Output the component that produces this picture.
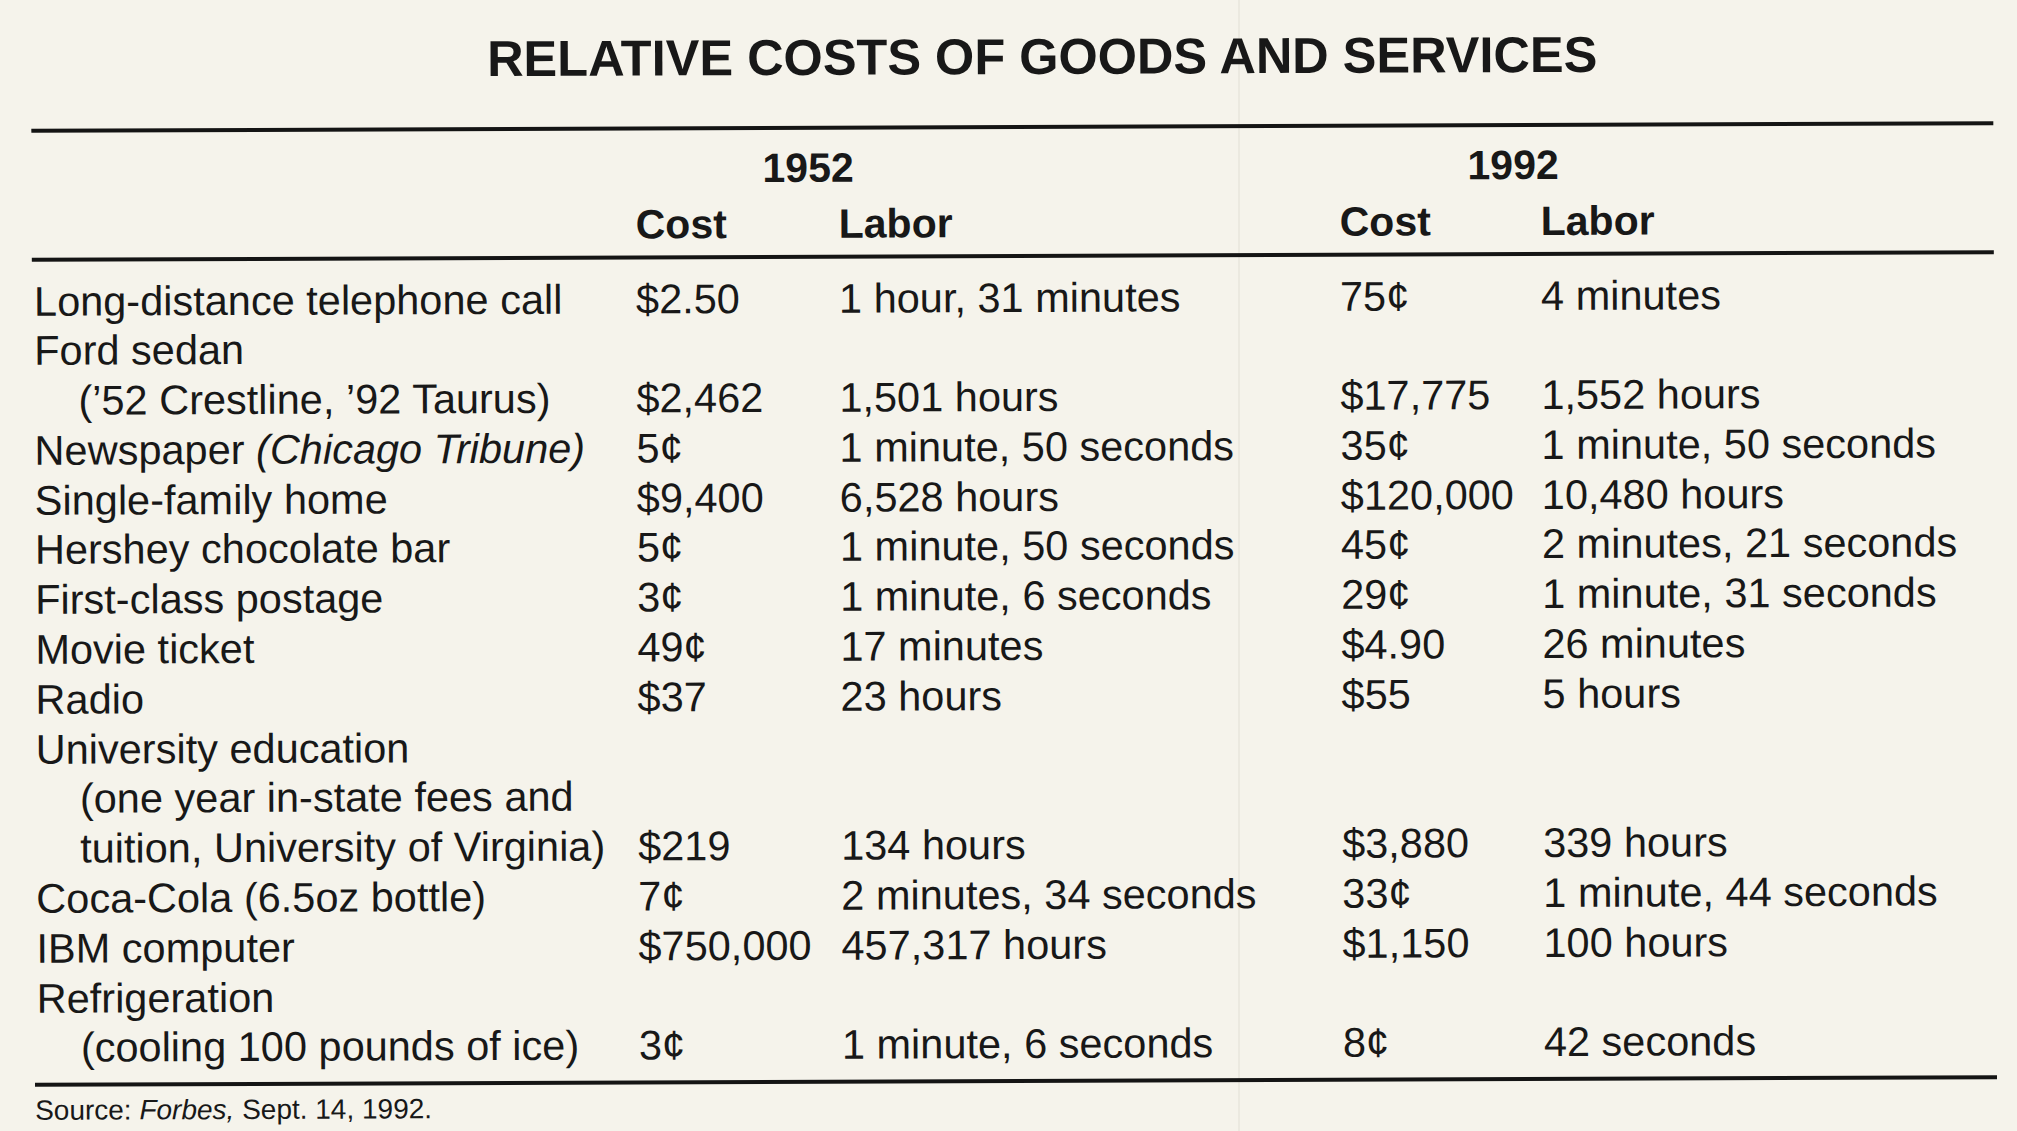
import React from "react";

type Row = { label: React.ReactNode; indent?: boolean; c1?: string; l1?: string; c2?: string; l2?: string };

const rows: Row[] = [
  { label: "Long-distance telephone call", c1: "$2.50", l1: "1 hour, 31 minutes", c2: "75¢", l2: "4 minutes" },
  { label: "Ford sedan" },
  { label: "(’52 Crestline, ’92 Taurus)", indent: true, c1: "$2,462", l1: "1,501 hours", c2: "$17,775", l2: "1,552 hours" },
  {
    label: (
      <>
        Newspaper <span className="italic">(Chicago Tribune)</span>
      </>
    ),
    c1: "5¢",
    l1: "1 minute, 50 seconds",
    c2: "35¢",
    l2: "1 minute, 50 seconds",
  },
  { label: "Single-family home", c1: "$9,400", l1: "6,528 hours", c2: "$120,000", l2: "10,480 hours" },
  { label: "Hershey chocolate bar", c1: "5¢", l1: "1 minute, 50 seconds", c2: "45¢", l2: "2 minutes, 21 seconds" },
  { label: "First-class postage", c1: "3¢", l1: "1 minute, 6 seconds", c2: "29¢", l2: "1 minute, 31 seconds" },
  { label: "Movie ticket", c1: "49¢", l1: "17 minutes", c2: "$4.90", l2: "26 minutes" },
  { label: "Radio", c1: "$37", l1: "23 hours", c2: "$55", l2: "5 hours" },
  { label: "University education" },
  { label: "(one year in-state fees and", indent: true },
  { label: "tuition, University of Virginia)", indent: true, c1: "$219", l1: "134 hours", c2: "$3,880", l2: "339 hours" },
  { label: "Coca-Cola (6.5oz bottle)", c1: "7¢", l1: "2 minutes, 34 seconds", c2: "33¢", l2: "1 minute, 44 seconds" },
  { label: "IBM computer", c1: "$750,000", l1: "457,317 hours", c2: "$1,150", l2: "100 hours" },
  { label: "Refrigeration" },
  { label: "(cooling 100 pounds of ice)", indent: true, c1: "3¢", l1: "1 minute, 6 seconds", c2: "8¢", l2: "42 seconds" },
];

const cols = "grid grid-cols-[604px_203px_501px_201px_1fr]";

export default function App() {
  return (
    <div
      className="relative w-[2017px] h-[1131px] overflow-hidden bg-[#f5f3eb]"
      style={{ fontFamily: '"Liberation Sans", Arial, sans-serif' }}
    >
      {/* faint paper gutter showing through the scan */}
      <div className="absolute left-[1238px] top-0 h-full w-[2px] bg-[#ebe9e0]" />

      <div className="relative ml-[33px] w-[1962px] rotate-[-0.22deg] text-[#181818]">
        <h1 className="pt-[32px] pl-[456px] text-[50.5px] font-bold leading-none whitespace-nowrap">
          RELATIVE COSTS OF GOODS AND SERVICES
        </h1>
        <div className="mt-[42px] h-[4px] bg-[#141414]" />

        <div className={`${cols} mt-[18px] text-[41px] font-bold leading-[41px]`}>
          <div />
          <div className="col-span-2 pl-[127px]">1952</div>
          <div className="col-span-2 pl-[128px]">1992</div>
        </div>
        <div className={`${cols} mt-[15px] text-[41px] font-bold leading-[41px]`}>
          <div />
          <div>Cost</div>
          <div>Labor</div>
          <div>Cost</div>
          <div>Labor</div>
        </div>
        <div className="mt-[10px] h-[4px] bg-[#141414]" />

        <div className="mt-[15px] text-[41.5px] leading-[49.8px]">
          {rows.map((r, i) => (
            <div key={i} className={`${cols} whitespace-nowrap`}>
              <div className={r.indent ? "pl-[46px]" : "pl-[2px]"}>{r.label}</div>
              <div>{r.c1 ?? ""}</div>
              <div>{r.l1 ?? ""}</div>
              <div>{r.c2 ?? ""}</div>
              <div>{r.l2 ?? ""}</div>
            </div>
          ))}
        </div>

        <div className="mt-[10px] h-[4px] bg-[#141414]" />
        <div className="mt-[10px] text-[28px] leading-none whitespace-nowrap">
          Source: <span className="italic">Forbes,</span> Sept. 14, 1992.
        </div>
      </div>
    </div>
  );
}
